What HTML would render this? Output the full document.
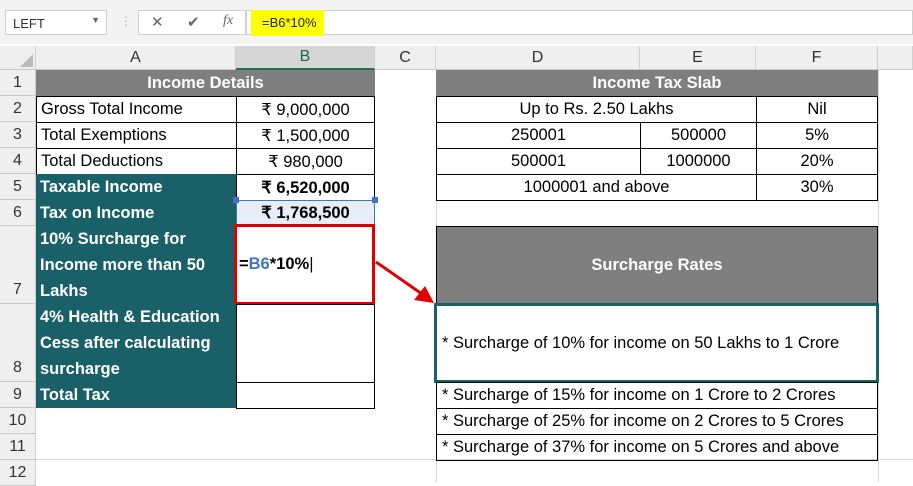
<!DOCTYPE html>
<html><head><meta charset="utf-8"><style>
body{margin:0;width:913px;height:482px;overflow:hidden;background:#fff;font-family:"Liberation Sans",sans-serif;position:relative}
div{box-sizing:border-box;position:absolute}
.c{font-size:16.5px;color:#000;display:flex;align-items:center;white-space:nowrap}
.ctr{justify-content:center}
.t{background:#1a6068;color:#fff;font-weight:bold;padding-left:4px}
.g{background:#7f7f7f;color:#fff;font-weight:bold;justify-content:center}
.b{border:1px solid #000}
.hd{background:#efefef;color:#333;font-size:16px;display:flex;align-items:center;justify-content:center;border-right:1px solid #d0d0d0;border-bottom:1px solid #c8c8c8}
.gl{background:#d8d8d8}
</style></head><body>
<div style="left:0;top:0;width:913px;height:44px;background:#f3f3f3"></div>
<div style="left:5px;top:10px;width:102px;height:25px;background:#fff;border:1px solid #d0d0d0;font-size:13px;padding:5px 7px;color:#333">LEFT<span style="position:absolute;right:6px;top:4px;font-size:9px;color:#666">▼</span></div>
<div style="left:120px;top:14px;font-size:12px;color:#aaa">⋮</div>
<div style="left:138px;top:10px;width:108px;height:25px;background:#fff;border:1px solid #d0d0d0;font-size:15px;color:#666"><span style="position:absolute;left:12px;top:2px">✕</span><span style="position:absolute;left:48px;top:2px">✔</span><span style="position:absolute;left:84px;top:2px;font-family:'Liberation Serif';font-style:italic;font-size:14px">fx</span></div>
<div style="left:246px;top:10px;width:667px;height:25px;background:#fff;border:1px solid #d0d0d0"></div>
<div style="left:251px;top:10px;width:73px;height:26px;background:#ffff00;font-size:13px;padding:5px 11px;color:#222">=B6*10%</div>
<div style="left:0;top:46px;width:913px;height:24px;background:#efefef"></div>
<div class="hd" style="left:0;top:46px;width:36px;height:24px"></div>
<div style="left:20px;top:54px;width:0;height:0;border-left:13px solid transparent;border-bottom:13px solid #bbb"></div>
<div class="hd" style="left:36px;top:46px;width:200px;height:24px">A</div>
<div class="hd" style="left:236px;top:46px;width:139px;height:24px;background:#d6d6d6;color:#1e6b3a;border-bottom:2px solid #217346">B</div>
<div class="hd" style="left:375px;top:46px;width:61px;height:24px">C</div>
<div class="hd" style="left:436px;top:46px;width:204px;height:24px">D</div>
<div class="hd" style="left:640px;top:46px;width:116px;height:24px">E</div>
<div class="hd" style="left:756px;top:46px;width:122px;height:24px">F</div>
<div class="hd" style="left:878px;top:46px;width:35px;height:24px"></div>
<div class="hd" style="left:0;top:70px;width:36px;height:26px">1</div>
<div class="hd" style="left:0;top:96px;width:36px;height:26px">2</div>
<div class="hd" style="left:0;top:122px;width:36px;height:26px">3</div>
<div class="hd" style="left:0;top:148px;width:36px;height:26px">4</div>
<div class="hd" style="left:0;top:174px;width:36px;height:26px">5</div>
<div class="hd" style="left:0;top:200px;width:36px;height:26px">6</div>
<div class="hd" style="left:0;top:226px;width:36px;height:78px;align-items:flex-end;padding-bottom:4px">7</div>
<div class="hd" style="left:0;top:304px;width:36px;height:78px;align-items:flex-end;padding-bottom:4px">8</div>
<div class="hd" style="left:0;top:382px;width:36px;height:26px">9</div>
<div class="hd" style="left:0;top:408px;width:36px;height:26px">10</div>
<div class="hd" style="left:0;top:434px;width:36px;height:26px">11</div>
<div class="hd" style="left:0;top:460px;width:36px;height:26px">12</div>
<div class="gl" style="left:436px;top:70px;width:1px;height:412px"></div>
<div class="gl" style="left:878px;top:70px;width:1px;height:412px"></div>
<div class="gl" style="left:36px;top:459px;width:877px;height:1px"></div>
<div class="c g" style="left:36px;top:70px;width:339px;height:26px">Income Details</div>
<div class="c b" style="left:36px;top:96px;width:201px;height:27px;padding-left:4px">Gross Total Income</div>
<div class="c b ctr" style="left:236px;top:96px;width:139px;height:27px">₹ 9,000,000</div>
<div class="c b" style="left:36px;top:122px;width:201px;height:27px;padding-left:4px">Total Exemptions</div>
<div class="c b ctr" style="left:236px;top:122px;width:139px;height:27px">₹ 1,500,000</div>
<div class="c b" style="left:36px;top:148px;width:201px;height:27px;padding-left:4px">Total Deductions</div>
<div class="c b ctr" style="left:236px;top:148px;width:139px;height:27px">₹ 980,000</div>
<div class="c t" style="left:36px;top:174px;width:200px;height:26px">Taxable Income</div>
<div class="c b ctr" style="left:236px;top:174px;width:139px;height:27px;font-weight:bold">₹ 6,520,000</div>
<div class="c t" style="left:36px;top:200px;width:200px;height:26px">Tax on Income</div>
<div class="c ctr" style="left:236px;top:200px;width:139px;height:26px;font-weight:bold;background:#e8eef7;border:1px solid #4472c4">₹ 1,768,500</div>
<div style="left:233px;top:197px;width:6px;height:6px;background:#4472c4"></div>
<div style="left:372px;top:197px;width:6px;height:6px;background:#4472c4"></div>
<div class="c t" style="left:36px;top:226px;width:200px;height:78px;line-height:26px;align-items:flex-start">10% Surcharge for<br>Income more than 50<br>Lakhs</div>
<div class="c" style="left:234px;top:224px;width:141px;height:81px;border:3px solid #e00000;padding-left:2px;font-weight:bold"><span>=<span style="color:#4472c4">B6</span>*10%<span style="font-weight:normal">|</span></span></div>
<div class="c t" style="left:36px;top:304px;width:200px;height:78px;line-height:26px;align-items:flex-start">4% Health &amp; Education<br>Cess after calculating<br>surcharge</div>
<div class="b" style="left:236px;top:304px;width:139px;height:79px"></div>
<div class="c t" style="left:36px;top:382px;width:200px;height:26px">Total Tax</div>
<div class="b" style="left:236px;top:382px;width:139px;height:27px"></div>
<svg style="position:absolute;left:370px;top:250px" width="70" height="60"><line x1="6" y1="12" x2="52" y2="44" stroke="#e00000" stroke-width="3"/><polygon points="64,53 44,50 55,36" fill="#e00000"/></svg>
<div class="c g" style="left:436px;top:70px;width:442px;height:26px">Income Tax Slab</div>
<div class="c b ctr" style="left:436px;top:96px;width:321px;height:27px">Up to Rs. 2.50 Lakhs</div>
<div class="c b ctr" style="left:756px;top:96px;width:122px;height:27px">Nil</div>
<div class="c b ctr" style="left:436px;top:122px;width:205px;height:27px">250001</div>
<div class="c b ctr" style="left:640px;top:122px;width:117px;height:27px">500000</div>
<div class="c b ctr" style="left:756px;top:122px;width:122px;height:27px">5%</div>
<div class="c b ctr" style="left:436px;top:148px;width:205px;height:27px">500001</div>
<div class="c b ctr" style="left:640px;top:148px;width:117px;height:27px">1000000</div>
<div class="c b ctr" style="left:756px;top:148px;width:122px;height:27px">20%</div>
<div class="c b ctr" style="left:436px;top:174px;width:321px;height:27px">1000001 and above</div>
<div class="c b ctr" style="left:756px;top:174px;width:122px;height:27px">30%</div>
<div class="c g b" style="left:436px;top:226px;width:442px;height:79px">Surcharge Rates</div>
<div class="c" style="left:434px;top:303px;width:445px;height:80px;border:3px solid #1a6068;padding-left:5px">* Surcharge of 10% for income on 50 Lakhs to 1 Crore</div>
<div class="c b" style="left:436px;top:382px;width:442px;height:27px;padding-left:5px">* Surcharge of 15% for income on 1 Crore to 2 Crores</div>
<div class="c b" style="left:436px;top:408px;width:442px;height:27px;padding-left:5px">* Surcharge of 25% for income on 2 Crores to 5 Crores</div>
<div class="c b" style="left:436px;top:434px;width:442px;height:27px;padding-left:5px">* Surcharge of 37% for income on 5 Crores and above</div>
</body></html>
